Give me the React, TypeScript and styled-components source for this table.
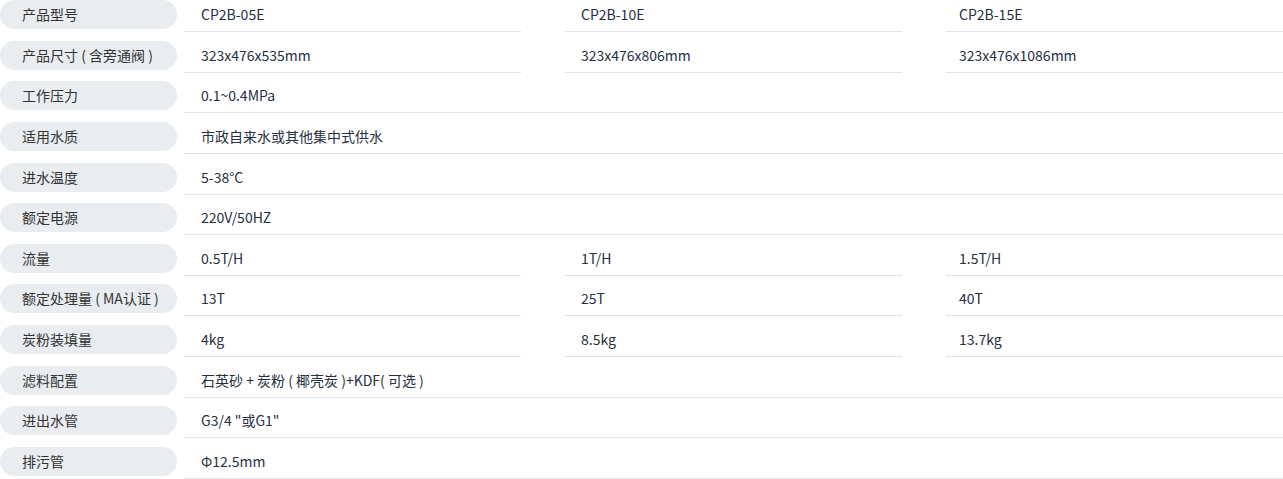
import React, { FC } from "react"
import styled, { createGlobalStyle } from "styled-components"

const GlobalStyle = createGlobalStyle`
  body {
    margin: 0;
    background: #fff;
    font-family: "Noto Sans CJK SC", "Noto Sans", sans-serif;
  }
`

const Table = styled.div`
  width: 1283px;
`

const Row = styled.div`
  display: flex;
  align-items: flex-start;
  height: 40.64px;
`

const Label = styled.div`
  flex: 0 0 177px;
  height: 29px;
  line-height: 28px;
  padding-left: 22px;
  box-sizing: border-box;
  border-radius: 15px;
  background: #e9edf0;
  color: #333;
  font-size: 14px;
  white-space: nowrap;
`

const Cells = styled.div`
  flex: 1;
  margin-left: 7px;
  display: grid;
  grid-template-columns: repeat(3, 1fr);
  column-gap: 44px;
`

const Cell = styled.div<{ $pad: number; $wide?: boolean }>`
  grid-column: ${({ $wide }) => ($wide ? "1 / -1" : "auto")};
  height: 31px;
  line-height: 28px;
  padding-left: ${({ $pad }) => $pad}px;
  border-bottom: 1px solid #e4e4e4;
  color: #263040;
  font-size: 14px;
  white-space: nowrap;
`

const pads = [17, 16, 13]

const specs: [string, string[]][] = [
  ["产品型号", ["CP2B-05E", "CP2B-10E", "CP2B-15E"]],
  ["产品尺寸 ( 含旁通阀 )", ["323x476x535mm", "323x476x806mm", "323x476x1086mm"]],
  ["工作压力", ["0.1~0.4MPa"]],
  ["适用水质", ["市政自来水或其他集中式供水"]],
  ["进水温度", ["5-38°C"]],
  ["额定电源", ["220V/50HZ"]],
  ["流量", ["0.5T/H", "1T/H", "1.5T/H"]],
  ["额定处理量 ( MA认证 )", ["13T", "25T", "40T"]],
  ["炭粉装填量", ["4kg", "8.5kg", "13.7kg"]],
  ["滤料配置", ["石英砂 + 炭粉 ( 椰壳炭 )+KDF( 可选 )"]],
  ["进出水管", ["G3/4 \"或G1\""]],
  ["排污管", ["Φ12.5mm"]],
]

const App: FC = () => (
  <>
    <GlobalStyle />
    <Table>
      {specs.map(([label, values]) => (
        <Row key={label}>
          <Label>{label}</Label>
          <Cells>
            {values.map((v, i) => (
              <Cell key={i} $pad={pads[i]} $wide={values.length === 1}>
                {v}
              </Cell>
            ))}
          </Cells>
        </Row>
      ))}
    </Table>
  </>
)

export default App
